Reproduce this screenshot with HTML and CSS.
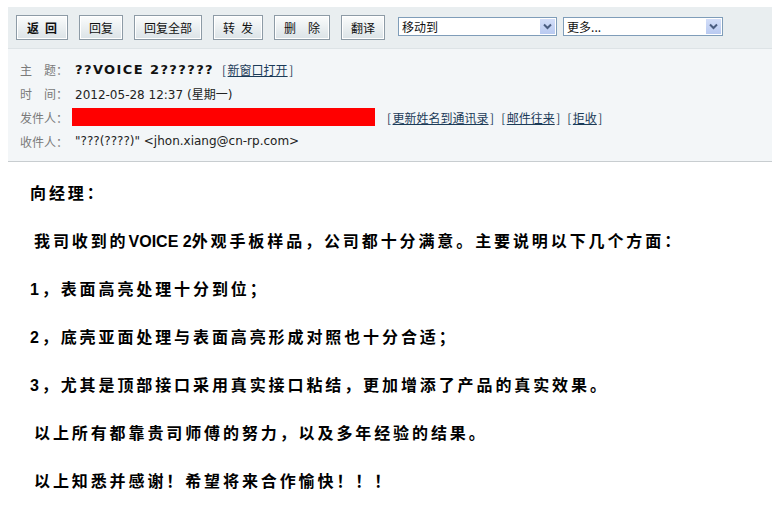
FILE: index.html
```html
<!DOCTYPE html>
<html lang="zh-CN">
<head>
    <meta charset="UTF-8">
    <title>邮件</title>
    <link rel="stylesheet" href="styles.css">
</head>
<body>
    <div class="toolbar">
        <button class="btn btn-back">返&ensp;回</button>
        <button class="btn">回复</button>
        <button class="btn">回复全部</button>
        <button class="btn">转&ensp;发</button>
        <button class="btn">删　除</button>
        <button class="btn">翻译</button>
        <div class="select select-move">
            <span class="select-text">移动到</span>
            <span class="select-arrow"><svg width="15" height="15" viewBox="0 0 15 15"><path d="M4 5.5 L7.5 9 L11 5.5" fill="none" stroke="#4a5d80" stroke-width="2"/></svg></span>
        </div>
        <div class="select select-more">
            <span class="select-text">更多...</span>
            <span class="select-arrow"><svg width="15" height="15" viewBox="0 0 15 15"><path d="M4 5.5 L7.5 9 L11 5.5" fill="none" stroke="#4a5d80" stroke-width="2"/></svg></span>
        </div>
    </div>

    <div class="header">
        <div class="row">
            <span class="label">主　题：</span>
            <span class="subject">??VOICE 2??????</span>
            <span class="link-item">[<a href="#">新窗口打开</a>]</span>
        </div>
        <div class="row">
            <span class="label">时　间：</span>
            <span class="value">2012-05-28 12:37 (星期一)</span>
        </div>
        <div class="row">
            <span class="label">发件人：</span>
            <span class="sender-mask"></span>
            <span class="sender-links">
                <span class="link-item">[<a href="#">更新姓名到通讯录</a>]</span>
                <span class="link-item">[<a href="#">邮件往来</a>]</span>
                <span class="link-item">[<a href="#">拒收</a>]</span>
            </span>
        </div>
        <div class="row">
            <span class="label">收件人：</span>
            <span class="value">"???(????)" &lt;jhon.xiang@cn-rp.com&gt;</span>
        </div>
    </div>

    <div class="mail-body">
        <p>向经理：</p>
        <p class="indent">我司收到的<span class="latin">VOICE 2</span>外观手板样品，公司都十分满意。主要说明以下几个方面：</p>
        <p>1，表面高亮处理十分到位；</p>
        <p>2，底壳亚面处理与表面高亮形成对照也十分合适；</p>
        <p>3，尤其是顶部接口采用真实接口粘结，更加增添了产品的真实效果。</p>
        <p class="indent">以上所有都靠贵司师傅的努力，以及多年经验的结果。</p>
        <p class="indent">以上知悉并感谢！希望将来合作愉快！！！</p>
    </div>
</body>
</html>
```

FILE: styles.css
```css
body {
    margin: 7px 0 0 8px;
    font-family: "DejaVu Sans", "Noto Sans CJK SC", sans-serif;
    font-size: 12px;
    color: #333;
    background: #fff;
}
.toolbar {
    display: flex;
    align-items: center;
    height: 41px;
    padding-left: 8px;
    background: #e9eef0;
    border-bottom: 1px solid #dde3e6;
}
.btn {
    height: 25px;
    margin-right: 11px;
    padding: 0 9px;
    font-family: "Noto Sans CJK SC", sans-serif;
    font-size: 12px;
    line-height: 21px;
    color: #111;
    background: linear-gradient(#fbfcfc, #e9eef0 55%, #dbe3e7);
    border: 1px solid #8d9ba6;
    box-shadow: inset 0 0 0 1px #fff;
    cursor: pointer;
}
.btn-back {
    width: 52px;
    font-weight: bold;
}
.select {
    display: flex;
    align-items: center;
    justify-content: space-between;
    box-sizing: border-box;
    height: 19px;
    margin-top: -2px;
    padding: 1px;
    background: #fff;
    border: 1px solid #7f9db9;
}
.select-move {
    width: 159px;
    margin-left: 2px;
}
.select-more {
    width: 160px;
    margin-left: 6px;
}
.select-text {
    padding-left: 2px;
    font-family: "Noto Sans CJK SC", sans-serif;
    font-size: 12px;
    line-height: 15px;
    color: #111;
}
.select-arrow {
    display: block;
    width: 15px;
    height: 15px;
    background: linear-gradient(#d3def8, #b9caf1);
}
.select-arrow svg {
    display: block;
}
.header {
    padding: 8px 0 8px 12px;
    background: #f3f6f8;
    border-bottom: 1px solid #c8cdd0;
}
.row {
    display: flex;
    align-items: center;
    height: 24px;
    white-space: pre;
}
.label {
    width: 55px;
    font-family: "Noto Sans CJK SC", sans-serif;
    color: #7a7a7a;
}
.value {
    color: #222;
}
.subject {
    margin-right: 8px;
    font-weight: bold;
    font-size: 13px;
    letter-spacing: 1.4px;
    color: #111;
}
.link-item {
    font-family: "Noto Sans CJK SC", sans-serif;
    color: #1b3b58;
}
.link-item a {
    margin: 0 1.5px;
    color: #1b3b58;
}
.sender-mask {
    width: 303px;
    height: 18px;
    margin-left: -3px;
    background: #ff0000;
}
.sender-links {
    display: flex;
    gap: 7px;
    margin-left: 12px;
    white-space: nowrap;
}
.mail-body {
    padding: 8px 0 0 22px;
    font-family: "Liberation Sans", "Noto Sans CJK SC", sans-serif;
    font-size: 16px;
    font-weight: bold;
    letter-spacing: 2.9px;
    color: #000;
}
.mail-body p {
    margin: 0;
    line-height: 48px;
}
.indent {
    padding-left: 4px;
}
.latin {
    letter-spacing: 0;
}
```
